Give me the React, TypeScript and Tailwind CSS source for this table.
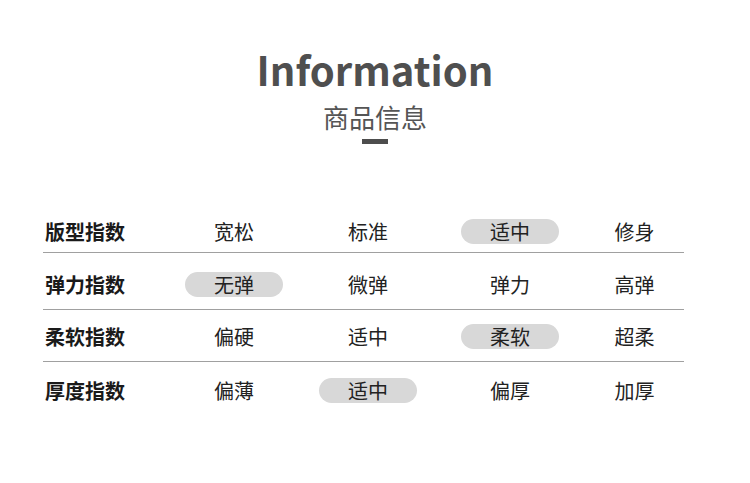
const rows = [
  {
    label: "版型指数",
    values: ["宽松", "标准", "适中", "修身"],
    active: 2,
    pad: "pt-[12px] pb-[8px]",
  },
  {
    label: "弹力指数",
    values: ["无弹", "微弹", "弹力", "高弹"],
    active: 0,
    pad: "pt-[19px] pb-[12px]",
  },
  {
    label: "柔软指数",
    values: ["偏硬", "适中", "柔软", "超柔"],
    active: 2,
    pad: "pt-[14px] pb-[12px]",
  },
  {
    label: "厚度指数",
    values: ["偏薄", "适中", "偏厚", "加厚"],
    active: 1,
    pad: "pt-[16px] pb-[12px]",
  },
];

export default function App() {
  return (
    <div className="h-[483px] w-[750px] overflow-hidden bg-white font-['Noto_Sans_CJK_SC',sans-serif]">
      <div className="flex flex-col items-center pt-[40px]">
        <h1 className="text-[40px] leading-[58px] font-bold text-[#4f4f4f]">Information</h1>
        <p className="mt-[2px] text-[26px] leading-[34px] text-[#555]">商品信息</p>
        <div className="mt-[5px] h-[5px] w-[26px] bg-[#4d4d4d]" />
      </div>

      <div className="ml-[43px] mt-[63px] w-[641px]">
        {rows.map((row, i) => (
          <div
            key={row.label}
            className={`grid grid-cols-[124px_134px_134px_150px_99px] items-center ${row.pad} ${
              i < rows.length - 1 ? "border-b border-[#a0a0a0]" : ""
            }`}
          >
            <div className="pl-[2px] text-[20px] leading-[25px] font-bold text-[#1a1a1a]">
              {row.label}
            </div>
            {row.values.map((v, j) => (
              <div key={j} className="flex justify-center">
                <span
                  className={`flex h-[25px] w-[98px] items-center justify-center rounded-full text-[20px] leading-[25px] text-[#222] ${
                    j === row.active ? "bg-[#d8d8d8]" : ""
                  }`}
                >
                  {v}
                </span>
              </div>
            ))}
          </div>
        ))}
      </div>
    </div>
  );
}
